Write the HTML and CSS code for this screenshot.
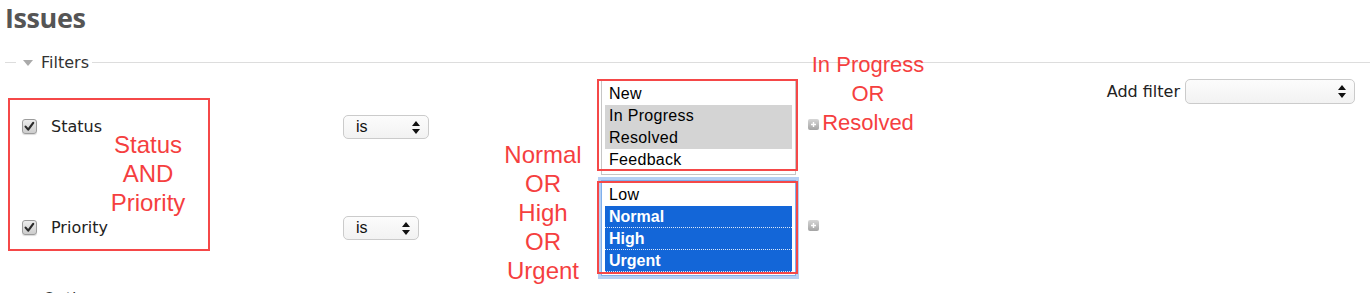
FILE: index.html
```html
<!DOCTYPE html>
<html lang="en">
<head>
  <meta charset="utf-8">
  <link rel="stylesheet" href="styles.css">
</head>
<body>
  <h2 class="title">Issues</h2>

  <div class="legend"><span class="toggle"></span>Filters</div>

  <div class="filter-layout">
    <div class="filter-rows">
      <label class="field">
        <span class="check"><svg viewBox="0 0 15 15" width="15" height="15"><path d="M3.6 7.6 L6.2 10.6 L11.2 3.8" fill="none" stroke="#2b2b2b" stroke-width="2.2" stroke-linecap="round" stroke-linejoin="round"/></svg></span>
        Status
      </label>
      <div class="select op-status">is
        <svg class="arrows" viewBox="0 0 8 13" width="8" height="13"><path d="M0 5 L4 0 L8 5 Z M0 8 L8 8 L4 13 Z" fill="#111"/></svg>
      </div>
      <div class="listbox">
        <div class="option">New</div>
        <div class="option picked">In Progress</div>
        <div class="option picked">Resolved</div>
        <div class="option">Feedback</div>
      </div>
      <span class="plus"><svg viewBox="0 0 11 11" width="11" height="11"><path d="M5.5 3 V8 M3 5.5 H8" stroke="#fff" stroke-width="1.4"/></svg></span>

      <label class="field">
        <span class="check"><svg viewBox="0 0 15 15" width="15" height="15"><path d="M3.6 7.6 L6.2 10.6 L11.2 3.8" fill="none" stroke="#2b2b2b" stroke-width="2.2" stroke-linecap="round" stroke-linejoin="round"/></svg></span>
        Priority
      </label>
      <div class="select op-priority">is
        <svg class="arrows" viewBox="0 0 8 13" width="8" height="13"><path d="M0 5 L4 0 L8 5 Z M0 8 L8 8 L4 13 Z" fill="#111"/></svg>
      </div>
      <div class="listbox focused">
        <div class="option">Low</div>
        <div class="option picked">Normal</div>
        <div class="option picked">High</div>
        <div class="option picked">Urgent</div>
      </div>
      <span class="plus"><svg viewBox="0 0 11 11" width="11" height="11"><path d="M5.5 3 V8 M3 5.5 H8" stroke="#fff" stroke-width="1.4"/></svg></span>
    </div>

    <div class="add-filter">
      Add filter
      <div class="select add-select">
        <svg class="arrows" viewBox="0 0 8 13" width="8" height="13"><path d="M0 5 L4 0 L8 5 Z M0 8 L8 8 L4 13 Z" fill="#111"/></svg>
      </div>
    </div>
  </div>

  <div class="legend options"><span class="toggle closed"></span>Options</div>

  <!-- hand-drawn annotations on top of the screenshot -->
  <div class="mark mark-fields"></div>
  <div class="mark mark-status"></div>
  <div class="mark mark-priority"></div>
  <div class="note note-and">Status<br>AND<br>Priority</div>
  <div class="note note-priority">Normal<br>OR<br>High<br>OR<br>Urgent</div>
  <div class="note note-status">In Progress<br>OR<br>Resolved</div>
</body>
</html>
```

FILE: styles.css
```css
* {
  box-sizing: border-box;
}

body {
  width: 1370px;
  height: 293px;
  margin: 0;
  position: relative;
  overflow: hidden;
  font-family: "DejaVu Sans", Verdana, sans-serif;
  font-size: 16px;
  color: #222;
  background: #ffffff;
}

.title {
  margin: 0 0 16px 5px;
  font-family: "Open Sans", sans-serif;
  font-weight: 700;
  font-size: 27px;
  line-height: 36px;
  letter-spacing: -0.4px;
  color: #555;
}

.legend {
  display: flex;
  align-items: center;
  height: 20px;
  margin-left: 5px;
  color: #333;
}

.legend::before {
  content: '';
  width: 11px;
  border-top: 1px solid #ddd;
}

.legend::after {
  content: '';
  flex: 1;
  margin-left: 3px;
  border-top: 1px solid #ddd;
}

.toggle {
  width: 0;
  height: 0;
  margin: 1px 8px 0 7px;
  border-left: 5px solid transparent;
  border-right: 5px solid transparent;
  border-top: 6px solid #aaa;
}

.toggle.closed {
  margin: 1px 12px 0 9px;
  border-top: 5px solid transparent;
  border-bottom: 5px solid transparent;
  border-left: 6px solid #aaa;
  border-right: 0;
}

.options {
  margin-top: 12px;
}

.options::after {
  display: none;
}

.filter-layout {
  display: flex;
  justify-content: space-between;
  align-items: flex-start;
  margin-top: 7px;
  padding: 0 15px 0 22px;
}

.filter-rows {
  display: grid;
  grid-template-columns: 321px 258px 195px auto;
  row-gap: 5px;
  align-items: center;
}

.field {
  display: flex;
  align-items: center;
  gap: 14px;
  margin-bottom: 2px;
}

.check {
  display: flex;
  width: 15px;
  height: 15px;
  border: 1px solid #9c9c9c;
  border-radius: 3px;
  background: linear-gradient(#ececec, #cdcdcd);
  box-shadow: 0 1px 1px rgba(0, 0, 0, 0.15);
}

.check svg {
  margin: -1px;
}

.select {
  display: flex;
  align-items: center;
  justify-content: space-between;
  height: 24px;
  padding: 0 8px 0 12px;
  border: 1px solid #cbcbcb;
  border-radius: 5px;
  background: linear-gradient(#fcfcfc, #f2f2f2);
  font-family: "Liberation Sans", Arial, sans-serif;
  font-size: 16px;
  color: #111;
}

.op-status {
  width: 86px;
}

.op-priority {
  width: 76px;
}

.add-filter {
  display: flex;
  align-items: center;
  gap: 5px;
  color: #222;
}

.add-select {
  width: 170px;
  height: 25px;
  justify-content: flex-end;
}

.listbox {
  width: 195px;
  padding: 3px;
  border: 1px solid #c6c6c6;
  background: #ffffff;
  font-family: "Liberation Sans", Arial, sans-serif;
  font-size: 16px;
  color: #000;
}

.option {
  height: 22px;
  padding-left: 4px;
  line-height: 22px;
  letter-spacing: 0.3px;
}

.option.picked {
  background: #d4d4d4;
}

.listbox.focused {
  border-color: #7fb0ec;
  box-shadow: 0 0 0 3px rgba(122, 170, 235, 0.55);
}

.listbox.focused .option.picked {
  border-bottom: 1px dotted rgba(255, 255, 255, 0.85);
  background: #1366d8;
  color: #ffffff;
  font-weight: 700;
  line-height: 21px;
  letter-spacing: 0;
}

.plus {
  display: flex;
  width: 11px;
  height: 11px;
  margin: 0 0 5px 12px;
  border-radius: 2px;
  background: linear-gradient(#d6d6d6, #a4a4a4);
}

.mark {
  position: absolute;
  border: 2px solid #f54848;
}

.mark-fields {
  left: 8px;
  top: 98px;
  width: 202px;
  height: 153px;
}

.mark-status {
  left: 597px;
  top: 79px;
  width: 201px;
  height: 92px;
}

.mark-priority {
  left: 597px;
  top: 181px;
  width: 201px;
  height: 93px;
}

.note {
  position: absolute;
  width: 140px;
  font-family: "Liberation Sans", Arial, sans-serif;
  font-size: 24px;
  line-height: 29px;
  text-align: center;
  color: #f53f3f;
}

.note-and {
  left: 78px;
  top: 130px;
}

.note-priority {
  left: 473px;
  top: 140px;
}

.note-status {
  left: 798px;
  top: 50px;
  font-size: 22px;
}
```
